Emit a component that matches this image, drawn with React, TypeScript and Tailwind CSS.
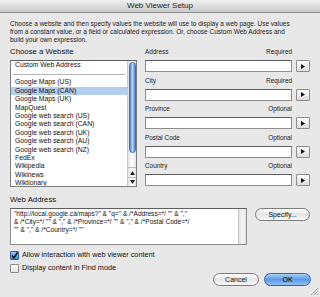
import React from 'react';

const sites = [
    'Google Maps (US)',
    'Google Maps (CAN)',
    'Google Maps (UK)',
    'MapQuest',
    'Google web search (US)',
    'Google web search (CAN)',
    'Google web search (UK)',
    'Google web search (AU)',
    'Google web search (NZ)',
    'FedEx',
    'Wikipedia',
    'Wikinews',
    'Wiktionary',
];

const fields = [
    { label: 'Address', need: 'Required' },
    { label: 'City', need: 'Required' },
    { label: 'Province', need: 'Optional' },
    { label: 'Postal Code', need: 'Optional' },
    { label: 'Country', need: 'Optional' },
];

function ArrowButton() {
    return (
        <div className="w-[14px] h-[12px] border border-[#8e8e8e] rounded-[1px] bg-gradient-to-b from-white to-[#dcdcdc] flex items-center justify-center">
            <svg width="4" height="5" viewBox="0 0 4 5">
                <path d="M0 0 L4 2.5 L0 5 Z" fill="#111" />
            </svg>
        </div>
    );
}

function AquaButton({ label, primary, w }: { label: string; primary?: boolean; w: string }) {
    return (
        <div
            className={`${w} h-[13px] rounded-full border flex items-center justify-center text-[7px] leading-none ${
                primary
                    ? 'border-[#3a64a8] bg-gradient-to-b from-[#a9cdf5] via-[#5d9ae6] to-[#8fc0f7] text-black'
                    : 'border-[#7c7c7c] bg-gradient-to-b from-white via-[#e6e6e6] to-[#f7f7f7] text-[#111]'
            }`}
        >
            {label}
        </div>
    );
}

export default function App() {
    return (
        <div className="w-[320px] h-[297px] relative overflow-hidden bg-[#e8e8e8] text-[#111]" style={{ fontFamily: '"Liberation Sans", Arial, sans-serif' }}>
            {/* title bar */}
            <div className="h-[13px] bg-gradient-to-b from-[#f2f2f2] to-[#c9c9c9] border-b border-[#8a8a8a] text-center text-[8px] leading-[12px] text-[#222]">
                Web Viewer Setup
            </div>

            <div className="px-[10px]">
                <div className="pt-[7px] text-[6.5px] leading-[7.8px] whitespace-nowrap text-[#1a1a1a]">
                    <div>Choose a website and then specify values the website will use to display a web page. Use values</div>
                    <div>from a constant value, or a field or calculated expression. Or, choose Custom Web Address and</div>
                    <div>build your own expression.</div>
                </div>

                <div className="flex gap-[8px] mt-[4px]">
                    {/* website list */}
                    <div className="w-[127px]">
                        <div className="h-[10px] text-[7.8px] leading-[10px]">Choose a Website</div>
                        <div className="mt-[3px] h-[127px] bg-white border border-[#7d7d7d] border-t-[#5e5e5e] flex">
                            <div className="flex-1 overflow-hidden text-[6.8px]">
                                <div className="h-[8.4px] leading-[8.4px] pl-[4px]">Custom Web Address</div>
                                <div className="h-[8.6px] flex items-center px-[2px]">
                                    <div className="h-px w-full bg-[#b4b4b4]" />
                                </div>
                                {sites.map((s) => (
                                    <div
                                        key={s}
                                        className={`h-[8.4px] leading-[8.4px] pl-[4px] whitespace-nowrap ${s === 'Google Maps (CAN)' ? 'bg-[#b5cdef]' : ''}`}
                                    >
                                        {s}
                                    </div>
                                ))}
                            </div>
                            <div className="w-[9px] border-l border-[#c8c8c8] bg-gradient-to-r from-[#e4e4e4] via-white to-[#e4e4e4] flex flex-col">
                                <div className="mx-[0.5px] mt-[1px] h-[91px] rounded-full border border-[#3d6fb8] bg-gradient-to-r from-[#4b83d4] via-[#b9d6f8] to-[#4b83d4]" />
                                <div className="flex-1" />
                                <div className="h-[10px] border-t border-[#bdbdbd] flex items-center justify-center">
                                    <svg width="5" height="4" viewBox="0 0 5 4"><path d="M2.5 0 L5 4 L0 4 Z" fill="#222" /></svg>
                                </div>
                                <div className="h-[9px] border-t border-[#bdbdbd] flex items-center justify-center">
                                    <svg width="5" height="4" viewBox="0 0 5 4"><path d="M0 0 L5 0 L2.5 4 Z" fill="#222" /></svg>
                                </div>
                            </div>
                        </div>
                    </div>

                    {/* fields */}
                    <div className="flex-1 flex flex-col gap-[3.5px]">
                        {fields.map((f) => (
                            <div key={f.label}>
                                <div className="h-[10px] w-[147px] flex justify-between text-[6.4px] leading-[10px] text-[#222]">
                                    <span>{f.label}</span>
                                    <span>{f.need}</span>
                                </div>
                                <div className="mt-[3px] flex items-center gap-[4px]">
                                    <div className="w-[147px] h-[12px] bg-white border border-[#8d8d8d] border-t-[#5e5e5e]" />
                                    <ArrowButton />
                                </div>
                            </div>
                        ))}
                    </div>
                </div>

                {/* web address */}
                <div className="mt-[8px] h-[10px] text-[7.8px] leading-[10px]">Web Address</div>
                <div className="mt-[3px] flex gap-[8px] items-start">
                    <div className="w-[238px] h-[37px] bg-white border border-[#8d8d8d] border-t-[#5e5e5e] flex">
                        <div className="flex-1 overflow-hidden pt-[1px] pl-[3px] text-[6.6px] leading-[8px] whitespace-nowrap">
                            <div>"http://local.google.ca/maps?" &amp; "q=" &amp; /*Address=*/ "" &amp; ","</div>
                            <div>&amp; /*City=*/ "" &amp; "," &amp; /*Province=*/ "" &amp; "," &amp; /*Postal Code=*/</div>
                            <div>"" &amp; "," &amp; /*Country=*/ ""</div>
                        </div>
                        <div className="w-[8px] border-l border-[#c4c4c4] bg-gradient-to-r from-[#e2e2e2] via-[#f6f6f6] to-[#e2e2e2]" />
                    </div>
                    <AquaButton label="Specify..." w="w-[55px]" />
                </div>

                {/* checkboxes */}
                <div className="mt-[5px] flex items-center gap-[3px] h-[10px] text-[7.3px]">
                    <div className="w-[9px] h-[9px] rounded-[1px] border border-[#2f5fa8] bg-gradient-to-b from-[#9cc3f2] to-[#4a86d8] flex items-center justify-center">
                        <svg width="7" height="7" viewBox="0 0 7 7">
                            <path d="M1 3.5 L3 6 L6.5 0.5" stroke="#0a0a0a" strokeWidth="1.4" fill="none" />
                        </svg>
                    </div>
                    <span>Allow interaction with web viewer content</span>
                </div>
                <div className="mt-[3px] flex items-center gap-[3px] h-[10px] text-[7.3px]">
                    <div className="w-[9px] h-[9px] rounded-[1px] border border-[#8a8a8a] bg-gradient-to-b from-white to-[#e6e6e6]" />
                    <span>Display content in Find mode</span>
                </div>

                <div className="flex justify-end gap-[5px] mr-[-1px]">
                    <AquaButton label="Cancel" w="w-[46px]" />
                    <AquaButton label="OK" primary w="w-[47px]" />
                </div>
            </div>

            {/* resize grip */}
            <svg className="absolute right-[1px] bottom-[1px]" width="10" height="10" viewBox="0 0 10 10">
                <path d="M9 2 L2 9 M9 5 L5 9 M9 8 L8 9" stroke="#9a9a9a" strokeWidth="0.8" />
            </svg>
        </div>
    );
}
